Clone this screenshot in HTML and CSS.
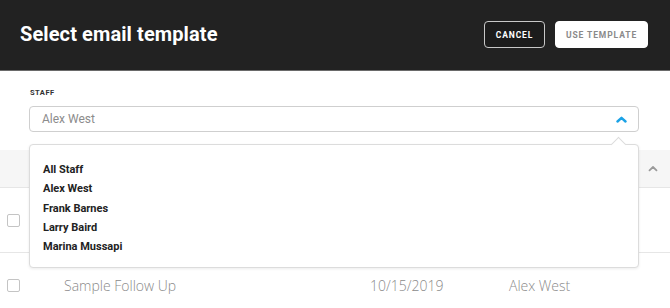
FILE: index.html
```html
<!DOCTYPE html>
<html lang="en">
<head>
    <meta charset="UTF-8">
    <meta name="viewport" content="width=device-width, initial-scale=1.0">
    <title>Select email template</title>
    <link rel="stylesheet" href="styles.css">
</head>
<body>
    <header class="modal-header">
        <h1>Select email template</h1>
        <div class="actions">
            <button class="btn btn-outline">Cancel</button>
            <button class="btn btn-light">Use Template</button>
        </div>
    </header>

    <div class="filter">
        <label class="field-label">Staff</label>
        <div class="select-wrap">
            <div class="select">
                <span>Alex West</span>
                <svg class="chevron" width="11" height="7" viewBox="0 0 11 7">
                    <polyline points="1.5,5.5 5.5,1.8 9.5,5.5" fill="none" stroke="#1ba2e6" stroke-width="2.4" stroke-linecap="round" stroke-linejoin="round"/>
                </svg>
            </div>
            <ul class="dropdown">
                <li>All Staff</li>
                <li>Alex West</li>
                <li>Frank Barnes</li>
                <li>Larry Baird</li>
                <li>Marina Mussapi</li>
            </ul>
        </div>
    </div>

    <div class="table">
        <div class="table-head">
            <svg class="sort" width="10" height="7" viewBox="0 0 10 7">
                <polyline points="1.5,5.3 5,2 8.5,5.3" fill="none" stroke="#9a9a9a" stroke-width="1.8" stroke-linecap="round" stroke-linejoin="round"/>
            </svg>
        </div>
        <div class="row tall">
            <span class="check"></span>
        </div>
        <div class="row">
            <span class="check"></span>
            <span class="col-name">Sample Follow Up</span>
            <span class="col-date">10/15/2019</span>
            <span class="col-owner">Alex West</span>
        </div>
    </div>
</body>
</html>
```

FILE: styles.css
```css
body {
    margin: 0;
    font-family: Roboto, "Liberation Sans", sans-serif;
    background: white;
    overflow: hidden;
}

.modal-header {
    height: 70px;
    background: #222222;
    border-bottom: 1px solid #6a6a6a;
    display: flex;
    align-items: center;
    justify-content: space-between;
    padding: 0 22px 0 20px;
}

.modal-header h1 {
    margin: 0 0 2px;
    color: white;
    font-size: 20px;
    font-weight: 700;
    letter-spacing: 0.1px;
}

.actions {
    display: flex;
    gap: 10px;
    margin-bottom: 1px;
}

.btn {
    height: 27px;
    border-radius: 4px;
    font-family: Roboto, "Liberation Sans", sans-serif;
    font-size: 8.5px;
    font-weight: 700;
    letter-spacing: 0.9px;
    text-transform: uppercase;
    cursor: pointer;
    padding: 0;
}

.btn-outline {
    width: 61px;
    background: #1c1c1c;
    color: white;
    border: 1px solid #c8c8c8;
}

.btn-light {
    width: 93px;
    background: white;
    color: #8a8a8a;
    border: 1px solid white;
}

.filter {
    padding: 17px 31px 0 29px;
}

.field-label {
    display: block;
    font-size: 7.5px;
    font-weight: 700;
    letter-spacing: 0.5px;
    color: #333;
    text-transform: uppercase;
    margin-left: 1px;
    margin-bottom: 9px;
}

.select-wrap {
    position: relative;
}

.select {
    height: 24px;
    border: 1px solid #cfcfcf;
    border-radius: 4px;
    display: flex;
    align-items: center;
    justify-content: space-between;
    padding: 0 11px 0 12px;
    font-size: 12px;
    color: #8c8c8c;
}

.chevron {
    margin-top: 1px;
}

.dropdown {
    position: absolute;
    top: 38px;
    left: 0;
    right: 0;
    margin: 0;
    padding: 15px 13px 11px;
    list-style: none;
    background: white;
    border: 1px solid #dcdcdc;
    border-radius: 4px;
    box-shadow: 0 1px 3px rgba(0,0,0,0.08);
    z-index: 2;
}

.dropdown::before {
    content: "";
    position: absolute;
    top: -6px;
    right: 14px;
    width: 10px;
    height: 10px;
    background: white;
    border-top: 1px solid #dcdcdc;
    border-left: 1px solid #dcdcdc;
    transform: rotate(45deg);
}

.dropdown li {
    font-size: 11px;
    font-weight: 700;
    color: #222;
    line-height: 19.3px;
}

.table {
    margin-top: 18px;
}

.table-head {
    height: 37px;
    background: #f6f6f6;
    border-bottom: 1px solid #e6e6e6;
    display: flex;
    align-items: center;
    justify-content: flex-end;
    padding-right: 12px;
}

.row {
    height: 64px;
    border-bottom: 1px solid #e6e6e6;
    display: flex;
    align-items: center;
    font-family: "Open Sans", sans-serif;
    font-weight: 300;
    font-size: 14px;
    color: #8a8a8a;
}

.check {
    width: 11px;
    height: 11px;
    border: 1px solid #c4c4c4;
    border-radius: 2px;
    margin-left: 7px;
}

.col-name {
    margin-left: 44px;
    width: 306px;
}

.col-date {
    width: 139px;
}
```
